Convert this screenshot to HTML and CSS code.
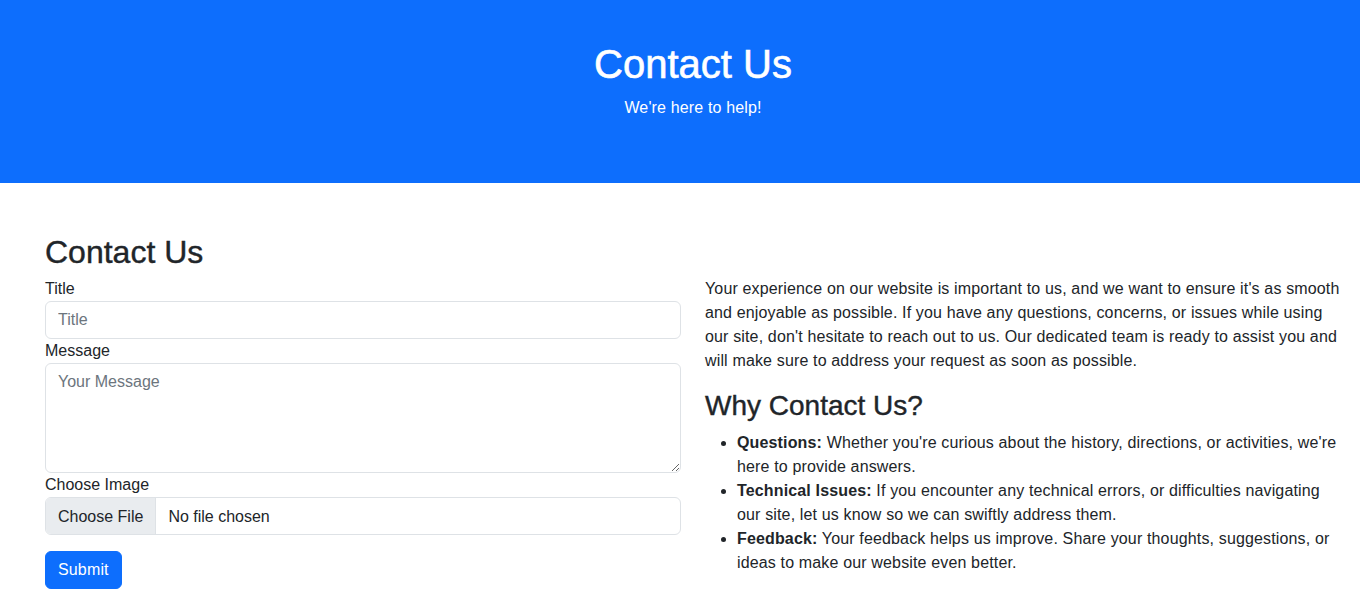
FILE: index.html
```html
<!DOCTYPE html>
<html lang="en">
<head>
<meta charset="utf-8">
<title>Contact Us</title>
<link rel="stylesheet" href="styles.css">
</head>
<body>
<header class="hero">
  <h1 class="hero-title">Contact Us</h1>
  <p class="hero-sub">We're here to help!</p>
</header>
<main class="main">
  <h2 class="page-title">Contact Us</h2>
  <div class="row">
    <form class="contact-form">
      <label class="form-label" for="title">Title</label>
      <input class="form-control" id="title" type="text" placeholder="Title">
      <label class="form-label" for="msg">Message</label>
      <textarea class="form-control textarea" id="msg" placeholder="Your Message"></textarea>
      <label class="form-label" for="img">Choose Image</label>
      <input class="form-control file" id="img" type="file">
      <button class="btn" type="button">Submit</button>
    </form>
    <section class="info">
      <p class="lead">Your experience on our website is important to us, and we want to ensure it's as smooth and enjoyable as possible. If you have any questions, concerns, or issues while using our site, don't hesitate to reach out to us. Our dedicated team is ready to assist you and will make sure to address your request as soon as possible.</p>
      <h3 class="why">Why Contact Us?</h3>
      <ul class="reasons">
        <li><strong>Questions:</strong> Whether you're curious about the history, directions, or activities, we're here to provide answers.</li>
        <li><strong>Technical Issues:</strong> If you encounter any technical errors, or difficulties navigating our site, let us know so we can swiftly address them.</li>
        <li><strong>Feedback:</strong> Your feedback helps us improve. Share your thoughts, suggestions, or ideas to make our website even better.</li>
      </ul>
    </section>
  </div>
</main>
</body>
</html>
```

FILE: styles.css
```css
* { box-sizing: border-box; }
html, body { margin: 0; padding: 0; }
body {
  font-family: "Liberation Sans", Arial, sans-serif;
  font-size: 16px;
  line-height: 24px;
  color: #212529;
  background: #fff;
}
.hero {
  background: #0d6efd;
  color: #fff;
  text-align: center;
  padding: 40px 19px 47px 45px;
  height: 183px;
}
.hero-title {
  margin: 0 0 8px;
  font-size: 40px;
  line-height: 48px;
  font-weight: 500;
  -webkit-text-stroke: 0.6px #fff;
}
.hero-sub {
  margin: 0 0 16px;
  font-size: 16px;
  line-height: 24px;
  letter-spacing: 0.15px;
}
.main {
  padding: 50px 19px 0 45px;
}
.page-title {
  margin: 0 0 6px;
  font-size: 32px;
  line-height: 38px;
  font-weight: 500;
  -webkit-text-stroke: 0.4px #212529;
}
.row {
  display: flex;
  gap: 24px;
}
.contact-form {
  width: 636px;
  display: flex;
  flex-direction: column;
  align-items: flex-start;
}
.info {
  width: 636px;
  letter-spacing: 0.15px;
}
.form-label {
  display: block;
  line-height: 24px;
}
.form-control {
  display: block;
  width: 100%;
  height: 38px;
  padding: 6px 12px;
  font-family: inherit;
  font-size: 16px;
  line-height: 24px;
  color: #212529;
  background: #fff;
  border: 1px solid #dee2e6;
  border-radius: 6px;
  outline: none;
}
.form-control::placeholder { color: #6c757d; opacity: 1; }
.textarea {
  height: 110px;
  resize: vertical;
}
.file {
  overflow: hidden;
}
.file::file-selector-button {
  padding: 6px 12px;
  margin: -6px 12px -6px -12px;
  height: 38px;
  font-family: inherit;
  font-size: 16px;
  color: #212529;
  background: #e9ecef;
  border: 0;
  border-right: 1px solid #dee2e6;
  border-radius: 0;
}
.btn {
  margin-top: 16px;
  height: 38px;
  padding: 6px 12px;
  font-family: inherit;
  font-size: 16px;
  line-height: 24px;
  letter-spacing: 0.15px;
  color: #fff;
  background: #0d6efd;
  border: 1px solid #0d6efd;
  border-radius: 6px;
}
.lead {
  margin: 0 0 16px;
}
.why {
  margin: 0 0 8px;
  font-size: 28px;
  line-height: 34px;
  font-weight: 500;
  letter-spacing: 0;
  -webkit-text-stroke: 0.4px #212529;
}
.reasons {
  margin: 0;
  padding-left: 32px;
}
.reasons strong { font-weight: 700; }
```
